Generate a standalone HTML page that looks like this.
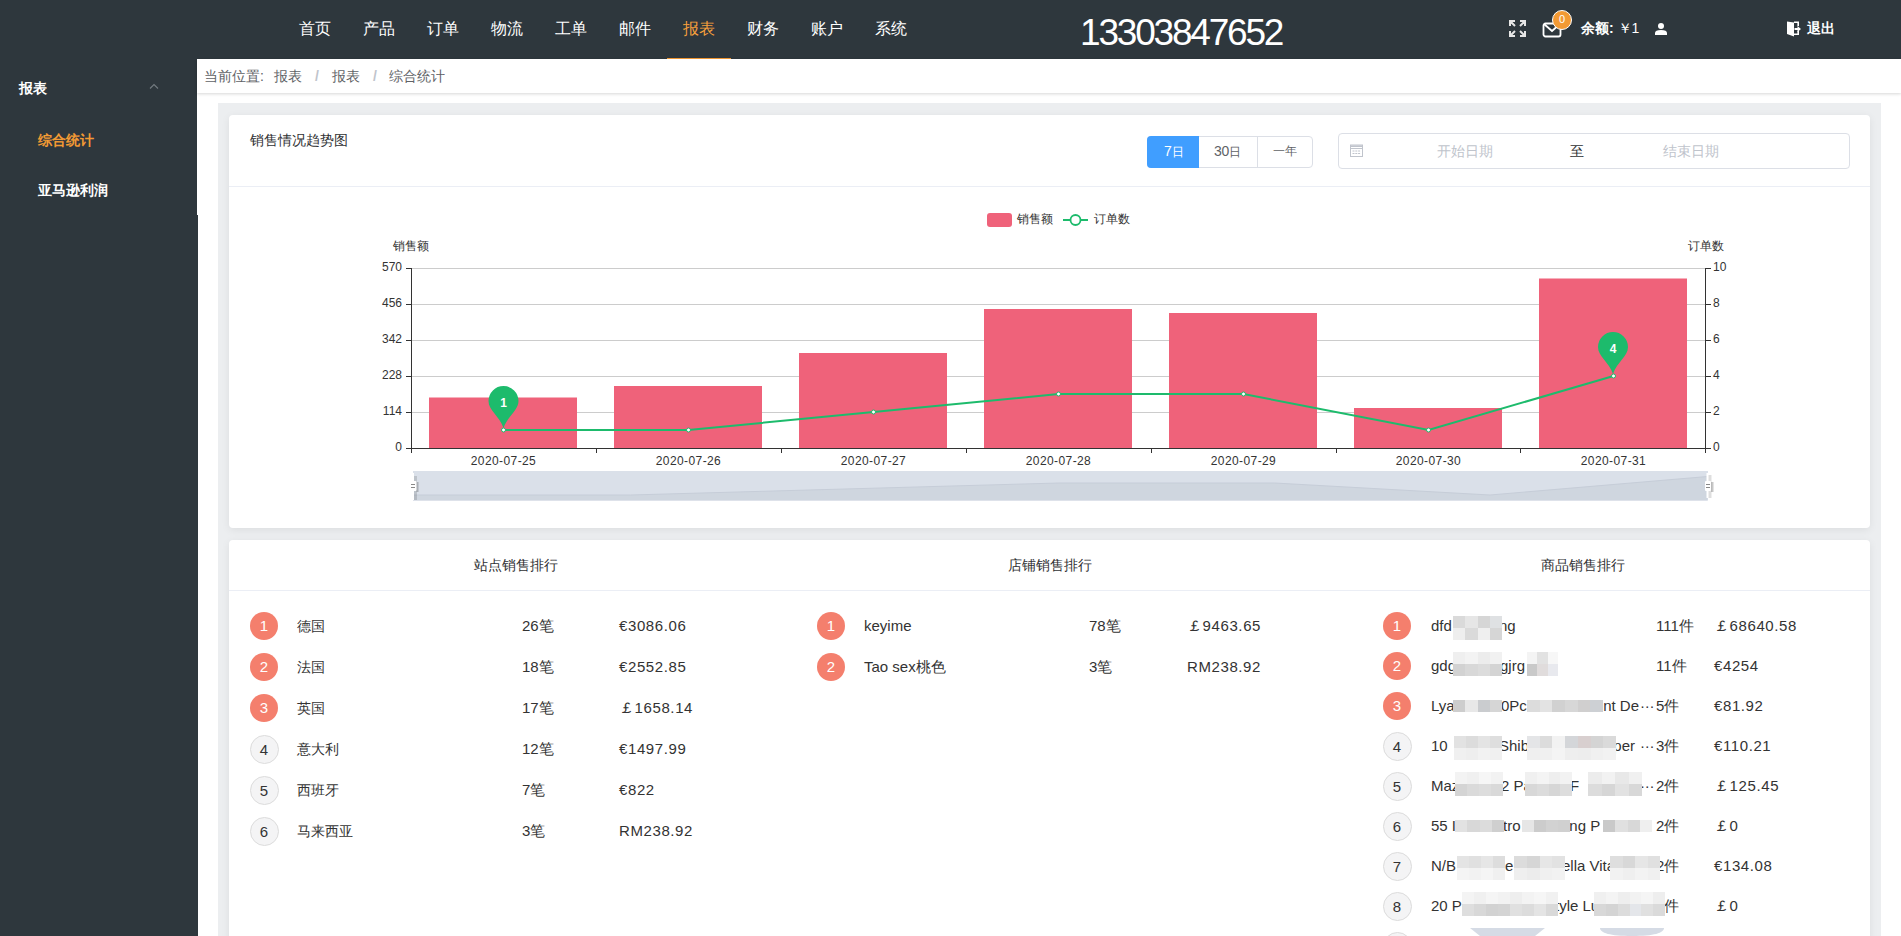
<!DOCTYPE html>
<html><head><meta charset="utf-8">
<style>
*{margin:0;padding:0;box-sizing:border-box}
html,body{width:1901px;height:936px;overflow:hidden;background:#fff;font-family:"Liberation Sans",sans-serif;color:#303133}
.a{position:absolute;white-space:nowrap}
#hdr{left:0;top:0;width:1901px;height:59px;background:#2e373d}
#side{left:0;top:59px;width:197px;height:877px;background:#2e373d}
.nav{top:19px;font-size:16px;color:#fff;line-height:20px}
#bc{left:197px;top:59px;width:1704px;height:34px;background:#fff;box-shadow:0 1px 3px rgba(0,0,0,.16)}
#gray{left:218px;top:103px;width:1663px;height:833px;background:#eceef0}
.card{background:#fff;border-radius:4px;box-shadow:0 2px 8px rgba(0,0,0,.07)}
#c1{left:229px;top:115px;width:1641px;height:413px}
#c2{left:229px;top:540px;width:1641px;height:420px}
.t14{font-size:14px;line-height:16px}
.rk{width:28px;height:28px;border-radius:50%;font-size:15px;line-height:28px;text-align:center}
.r1{background:#f47f6d;color:#fff}
.r2{background:#f4f4f5;color:#333;border:1px solid #dcdcdc;line-height:27px;width:29px;height:29px;margin:-0.5px 0 0 -0.5px}
.nm{font-size:15px;color:#333;line-height:18px}
.mz{position:absolute;display:flex;flex-wrap:wrap}
.mz i{display:block;width:12px;height:12px}
</style></head><body>
<div id="hdr" class="a"></div>
<div id="side" class="a"></div>
<div class="a" style="left:197px;top:215px;width:1px;height:721px;background:#2e373d"></div>
<!-- nav -->
<div class="a nav" style="left:299px">首页</div>
<div class="a nav" style="left:363px">产品</div>
<div class="a nav" style="left:427px">订单</div>
<div class="a nav" style="left:491px">物流</div>
<div class="a nav" style="left:555px">工单</div>
<div class="a nav" style="left:619px">邮件</div>
<div class="a nav" style="left:683px;color:#f7a03c">报表</div>
<div class="a nav" style="left:747px">财务</div>
<div class="a nav" style="left:811px">账户</div>
<div class="a nav" style="left:875px">系统</div>
<div class="a" style="left:667px;top:57.5px;width:64px;height:1.5px;background:#f39a34"></div>
<div class="a" style="left:1080px;top:12px;font-size:37px;line-height:42px;color:#fff;letter-spacing:-2.2px">13303847652</div>
<!-- header icons -->
<svg class="a" style="left:1509px;top:20px" width="17" height="17" viewBox="0 0 17 17" fill="none" stroke="#e6e6e6" stroke-width="2">
<path d="M1 6V1h5M1 1l5 5M11 1h5v5M16 1l-5 5M1 11v5h5M1 16l5-5M16 11v5h-5M16 16l-5-5"/></svg>
<svg class="a" style="left:1542px;top:22px" width="20" height="16" viewBox="0 0 20 16" fill="none" stroke="#fff" stroke-width="1.8">
<rect x="1.5" y="1.5" width="17" height="13" rx="2"/><path d="M2 2l8 7 8-7"/></svg>
<div class="a" style="left:1552px;top:10px;width:20px;height:20px;border-radius:50%;background:#f39a34;border:1.2px solid #fff;color:#fff;font-size:11px;line-height:17.6px;text-align:center">0</div>
<div class="a" style="left:1581px;top:20px;font-size:14px;line-height:16px;color:#fff"><b>余额:</b> ￥1</div>
<svg class="a" style="left:1655px;top:23px" width="12" height="12" viewBox="0 0 12 12" fill="#fff"><circle cx="6" cy="3" r="3"/><path d="M0 12v-2c0-2 2-3 6-3s6 1 6 3v2z"/></svg>
<svg class="a" style="left:1787px;top:21px" width="15" height="16" viewBox="0 0 15 16" fill="#fff"><path d="M0 0.5L7 1.5V15.5L0 13z"/><path d="M7 0.5h5v4.5h-1.6V2H7zM7 12.5h3.4V10H12v4H7z"/><path d="M7.5 7h3V5l3.5 3-3.5 3V9h-3z"/></svg>
<div class="a" style="left:1807px;top:20px;font-size:14px;line-height:16px;color:#fff;font-weight:bold">退出</div>
<!-- sidebar -->
<div class="a" style="left:19px;top:80px;font-size:14px;line-height:16px;color:#fff;font-weight:bold">报表</div>
<svg class="a" style="left:149px;top:83px" width="10" height="7" viewBox="0 0 10 7" fill="none" stroke="#737b81" stroke-width="1.1"><path d="M1 5.5l4-4 4 4"/></svg>
<div class="a" style="left:38px;top:132px;font-size:14px;line-height:16px;color:#f39a34;font-weight:bold">综合统计</div>
<div class="a" style="left:38px;top:182px;font-size:14px;line-height:16px;color:#fff;font-weight:bold">亚马逊利润</div>
<!-- breadcrumb -->
<div id="bc" class="a"></div>
<div class="a" style="left:204px;top:68px;font-size:14px;line-height:16px;color:#606266">当前位置:</div>
<div class="a" style="left:274px;top:68px;font-size:14px;line-height:16px;color:#606266">报表</div>
<div class="a" style="left:315px;top:68px;font-size:14px;line-height:16px;color:#c0c4cc;font-weight:bold">/</div>
<div class="a" style="left:332px;top:68px;font-size:14px;line-height:16px;color:#606266">报表</div>
<div class="a" style="left:373px;top:68px;font-size:14px;line-height:16px;color:#c0c4cc;font-weight:bold">/</div>
<div class="a" style="left:389px;top:68px;font-size:14px;line-height:16px;color:#606266">综合统计</div>
<!-- content -->
<div id="gray" class="a"></div>
<div id="c1" class="a card"></div>
<div class="a" style="left:229px;top:186px;width:1641px;height:1px;background:#ebeef5"></div>
<div class="a" style="left:250px;top:132px;font-size:14px;line-height:16px;color:#303133">销售情况趋势图</div>
<!-- radio group -->
<div class="a" style="left:1147px;top:136px;width:166px;height:32px;border:1px solid #dcdfe6;border-radius:4px"></div>
<div class="a" style="left:1147px;top:136px;width:52px;height:32px;background:#409eff;border-radius:4px 0 0 4px"></div>
<div class="a" style="left:1257px;top:137px;width:1px;height:30px;background:#dcdfe6"></div>
<div class="a" style="left:1164px;top:143px;font-size:12px;line-height:16px;color:#fff"><span style="font-size:14px">7</span>日</div>
<div class="a" style="left:1214px;top:143px;font-size:12px;line-height:16px;color:#606266"><span style="font-size:14px;letter-spacing:-.3px">30</span>日</div>
<div class="a" style="left:1273px;top:144px;font-size:12px;line-height:14px;color:#606266">一年</div>
<!-- date range -->
<div class="a" style="left:1338px;top:133px;width:512px;height:36px;border:1px solid #dcdfe6;border-radius:4px"></div>
<svg class="a" style="left:1350px;top:144px" width="13" height="13" viewBox="0 0 13 13" fill="none" stroke="#c0c4cc" stroke-width="1"><rect x="0.5" y="1" width="12" height="11.5"/><path d="M0.5 2.2h12" stroke-width="1.6"/><path d="M0.5 4.5h12"/><path d="M2.5 7h8M2.5 9.5h8" stroke-dasharray="2 0.8"/></svg>
<div class="a" style="left:1437px;top:143px;font-size:14px;line-height:16px;color:#c0c4cc">开始日期</div>
<div class="a" style="left:1570px;top:143px;font-size:14px;line-height:16px;color:#303133">至</div>
<div class="a" style="left:1663px;top:143px;font-size:14px;line-height:16px;color:#c0c4cc">结束日期</div>
<!-- chart -->
<svg class="a" style="left:0;top:0" width="1901" height="936" font-family="Liberation Sans, sans-serif">
<rect x="987" y="213" width="25" height="14" rx="3" fill="#ef627a"/>
<text x="1017" y="222.5" font-size="12" fill="#333">销售额</text>
<path d="M1063 220h25" stroke="#1dbb6c" stroke-width="2"/>
<circle cx="1075.5" cy="220" r="5" fill="#fff" stroke="#1dbb6c" stroke-width="1.8"/>
<text x="1094" y="222.5" font-size="12" fill="#333">订单数</text>
<text x="393" y="250" font-size="12" fill="#333">销售额</text>
<text x="1688" y="250" font-size="12" fill="#333">订单数</text>
<g stroke="#ccc" stroke-width="1">
<path d="M411 268.5h1295M411 304.5h1295M411 340.5h1295M411 376.5h1295M411 412.5h1295"/>
</g>
<g fill="#ef627a">
<rect x="429" y="397.5" width="148" height="50.5"/>
<rect x="614" y="386" width="148" height="62"/>
<rect x="799" y="353" width="148" height="95"/>
<rect x="984" y="309" width="148" height="139"/>
<rect x="1169" y="313" width="148" height="135"/>
<rect x="1354" y="408" width="148" height="40"/>
<rect x="1539" y="278.5" width="148" height="169.5"/>
</g>
<g stroke="#333" stroke-width="1" fill="none">
<path d="M411.5 268v180M1705.5 268v180M406 448.5h1300"/>
<path d="M406 268.5h5M406 304.5h5M406 340.5h5M406 376.5h5M406 412.5h5"/>
<path d="M1706 268.5h5M1706 304.5h5M1706 340.5h5M1706 376.5h5M1706 412.5h5M1706 448.5h5"/>
<path d="M411.5 448v5M596.5 448v5M781.5 448v5M966.5 448v5M1151.5 448v5M1336.5 448v5M1520.5 448v5M1705.5 448v5"/>
</g>
<g font-size="12" fill="#333" text-anchor="end">
<text x="402" y="271">570</text><text x="402" y="307">456</text><text x="402" y="343">342</text><text x="402" y="379">228</text><text x="402" y="415">114</text><text x="402" y="451">0</text>
</g>
<g font-size="12" fill="#333">
<text x="1713" y="271">10</text><text x="1713" y="307">8</text><text x="1713" y="343">6</text><text x="1713" y="379">4</text><text x="1713" y="415">2</text><text x="1713" y="451">0</text>
</g>
<g font-size="12" fill="#333" text-anchor="middle" letter-spacing="0.4">
<text x="503.5" y="465">2020-07-25</text><text x="688.5" y="465">2020-07-26</text><text x="873.5" y="465">2020-07-27</text><text x="1058.5" y="465">2020-07-28</text><text x="1243.5" y="465">2020-07-29</text><text x="1428.5" y="465">2020-07-30</text><text x="1613.5" y="465">2020-07-31</text>
</g>
<polyline points="503.5,430 688.5,430 873.5,412 1058.5,394 1243.5,394 1428.5,430 1613.5,376" fill="none" stroke="#1dbb6c" stroke-width="2"/>
<g fill="#fff" stroke="#1dbb6c" stroke-width="1">
<circle cx="503.5" cy="430" r="2"/><circle cx="688.5" cy="430" r="2"/><circle cx="873.5" cy="412" r="2"/><circle cx="1058.5" cy="394" r="2"/><circle cx="1243.5" cy="394" r="2"/><circle cx="1428.5" cy="430" r="2"/><circle cx="1613.5" cy="376" r="2"/>
</g>
<g fill="#1dbb6c">
<path d="M503.5 428C499.5 416 488.5 410.5 488.5 401a15 15 0 0 1 30 0C518.5 410.5 507.5 416 503.5 428z"/>
<path d="M1613 374C1609 362 1598 356.5 1598 347a15 15 0 0 1 30 0C1628 356.5 1617 362 1613 374z"/>
</g>
<g font-size="12" fill="#fff" text-anchor="middle" font-weight="bold">
<text x="503.5" y="407">1</text><text x="1613" y="353">4</text>
</g>
<!-- datazoom -->
<rect x="413" y="471" width="1295" height="29.5" fill="#dae0e9"/>
<path d="M413 495L630.5 495L1059 483L1274.5 483L1490 495L1707.5 476.5V500.5H413z" fill="#cfd6df"/>
<path d="M413 495L630.5 495L1059 483L1274.5 483L1490 495L1707.5 476.5" stroke="#c6cdd8" fill="none" stroke-width="1"/>
<g fill="rgba(0,0,0,.13)"><rect x="414" y="476" width="3" height="24"/><rect x="1708.5" y="475" width="3" height="23"/></g>
<g fill="rgba(0,0,0,.22)"><rect x="416.5" y="482" width="2" height="10"/><rect x="1711" y="482" width="2.5" height="10"/></g>
<g fill="#fff">
<rect x="412.5" y="473" width="1.5" height="27"/><rect x="410" y="481" width="6.5" height="10" rx="1"/>
<rect x="1706.5" y="473" width="1.5" height="25"/><rect x="1705" y="481" width="6" height="10" rx="1"/>
</g>
<g fill="#888"><rect x="411" y="484" width="4" height="1"/><rect x="411" y="487" width="4" height="1"/><rect x="1706" y="484" width="4" height="1"/><rect x="1706" y="487" width="4" height="1"/></g>
</svg>
<!-- card 2 -->
<div id="c2" class="a card"></div>
<div class="a" style="left:229px;top:590px;width:1641px;height:1px;background:#ebeef5"></div>
<div class="a t14" style="left:474px;top:557px">站点销售排行</div>
<div class="a t14" style="left:1008px;top:557px">店铺销售排行</div>
<div class="a t14" style="left:1541px;top:557px">商品销售排行</div>
<div id="rows">
<div class="a rk r1" style="left:250px;top:612px">1</div>
<div class="a nm" style="left:297px;top:617px;font-size:14px">德国</div>
<div class="a nm" style="left:522px;top:617px;">26笔</div>
<div class="a nm" style="left:619px;top:617px;letter-spacing:.6px">€3086.06</div>
<div class="a rk r1" style="left:250px;top:653px">2</div>
<div class="a nm" style="left:297px;top:658px;font-size:14px">法国</div>
<div class="a nm" style="left:522px;top:658px;">18笔</div>
<div class="a nm" style="left:619px;top:658px;letter-spacing:.6px">€2552.85</div>
<div class="a rk r1" style="left:250px;top:694px">3</div>
<div class="a nm" style="left:297px;top:699px;font-size:14px">英国</div>
<div class="a nm" style="left:522px;top:699px;">17笔</div>
<div class="a nm" style="left:619px;top:699px;letter-spacing:.6px">￡1658.14</div>
<div class="a rk r2" style="left:250px;top:735px">4</div>
<div class="a nm" style="left:297px;top:740px;font-size:14px">意大利</div>
<div class="a nm" style="left:522px;top:740px;">12笔</div>
<div class="a nm" style="left:619px;top:740px;letter-spacing:.6px">€1497.99</div>
<div class="a rk r2" style="left:250px;top:776px">5</div>
<div class="a nm" style="left:297px;top:781px;font-size:14px">西班牙</div>
<div class="a nm" style="left:522px;top:781px;">7笔</div>
<div class="a nm" style="left:619px;top:781px;letter-spacing:.6px">€822</div>
<div class="a rk r2" style="left:250px;top:817px">6</div>
<div class="a nm" style="left:297px;top:822px;font-size:14px">马来西亚</div>
<div class="a nm" style="left:522px;top:822px;">3笔</div>
<div class="a nm" style="left:619px;top:822px;letter-spacing:.6px">RM238.92</div>
<div class="a rk r1" style="left:817px;top:612px">1</div>
<div class="a nm" style="left:864px;top:617px;">keyime</div>
<div class="a nm" style="left:1089px;top:617px;">78笔</div>
<div class="a nm" style="left:1187px;top:617px;letter-spacing:.6px">￡9463.65</div>
<div class="a rk r1" style="left:817px;top:653px">2</div>
<div class="a nm" style="left:864px;top:658px;">Tao sex桃色</div>
<div class="a nm" style="left:1089px;top:658px;">3笔</div>
<div class="a nm" style="left:1187px;top:658px;letter-spacing:.6px">RM238.92</div>
<div class="a rk r1" style="left:1383px;top:612px">1</div>
<div class="a nm" style="left:1431px;top:617px;">dfd</div>
<div class="a nm" style="left:1499px;top:617px;">ng</div>
<div class="a nm" style="left:1656px;top:617px;">111件</div>
<div class="a nm" style="left:1714px;top:617px;letter-spacing:.6px">￡68640.58</div>
<div class="a rk r1" style="left:1383px;top:652px">2</div>
<div class="a nm" style="left:1431px;top:657px;">gdg</div>
<div class="a nm" style="left:1500px;top:657px;">gjrg</div>
<div class="a nm" style="left:1656px;top:657px;">11件</div>
<div class="a nm" style="left:1714px;top:657px;letter-spacing:.6px">€4254</div>
<div class="a rk r1" style="left:1383px;top:692px">3</div>
<div class="a nm" style="left:1431px;top:697px;">Lya</div>
<div class="a nm" style="left:1501px;top:697px;">0Pc</div>
<div class="a nm" style="left:0px;top:697px;left:auto;right:262px">ent De</div>
<div class="a nm" style="left:1640px;top:697px;letter-spacing:-.2px">···</div>
<div class="a nm" style="left:1656px;top:697px;">5件</div>
<div class="a nm" style="left:1714px;top:697px;letter-spacing:.6px">€81.92</div>
<div class="a rk r2" style="left:1383px;top:732px">4</div>
<div class="a nm" style="left:1431px;top:737px;">10</div>
<div class="a nm" style="left:1499px;top:737px;">Shib</div>
<div class="a nm" style="left:0px;top:737px;left:auto;right:266px">per</div>
<div class="a nm" style="left:1640px;top:737px;letter-spacing:-.2px">···</div>
<div class="a nm" style="left:1656px;top:737px;">3件</div>
<div class="a nm" style="left:1714px;top:737px;letter-spacing:.6px">€110.21</div>
<div class="a rk r2" style="left:1383px;top:772px">5</div>
<div class="a nm" style="left:1431px;top:777px;">Maz</div>
<div class="a nm" style="left:1501px;top:777px;">2 Pa</div>
<div class="a nm" style="left:1570px;top:777px;">F</div>
<div class="a nm" style="left:1640px;top:777px;letter-spacing:-.2px">···</div>
<div class="a nm" style="left:1656px;top:777px;">2件</div>
<div class="a nm" style="left:1714px;top:777px;letter-spacing:.6px">￡125.45</div>
<div class="a rk r2" style="left:1383px;top:812px">6</div>
<div class="a nm" style="left:1431px;top:817px;">55 I</div>
<div class="a nm" style="left:1503px;top:817px;">tro</div>
<div class="a nm" style="left:1566px;top:817px;">ing P</div>
<div class="a nm" style="left:1656px;top:817px;">2件</div>
<div class="a nm" style="left:1714px;top:817px;letter-spacing:.6px">￡0</div>
<div class="a rk r2" style="left:1383px;top:852px">7</div>
<div class="a nm" style="left:1431px;top:857px;">N/B</div>
<div class="a nm" style="left:1505px;top:857px;">e</div>
<div class="a nm" style="left:1562px;top:857px;">ella Vita</div>
<div class="a nm" style="left:1656px;top:857px;">2件</div>
<div class="a nm" style="left:1714px;top:857px;letter-spacing:.6px">€134.08</div>
<div class="a rk r2" style="left:1383px;top:892px">8</div>
<div class="a nm" style="left:1431px;top:897px;">20 P</div>
<div class="a nm" style="left:1555px;top:897px;">tyle Lu</div>
<div class="a nm" style="left:1656px;top:897px;">2件</div>
<div class="a nm" style="left:1714px;top:897px;letter-spacing:.6px">￡0</div>
<div class="a rk r2" style="left:1383px;top:932px">9</div>
<div class="a nm" style="left:1656px;top:937px;">2件</div>
<div class="a" style="left:1453.0px;top:616.0px;width:12.7px;height:12.4px;background:#dadada"></div>
<div class="a" style="left:1465.2px;top:616.0px;width:12.7px;height:12.4px;background:#e6e6e6"></div>
<div class="a" style="left:1477.5px;top:616.0px;width:12.7px;height:12.4px;background:#d6d6d6"></div>
<div class="a" style="left:1489.8px;top:616.0px;width:12.7px;height:12.4px;background:#dfe1e3"></div>
<div class="a" style="left:1453.0px;top:628.0px;width:12.7px;height:12.4px;background:#eeeeee"></div>
<div class="a" style="left:1465.2px;top:628.0px;width:12.7px;height:12.4px;background:#dadada"></div>
<div class="a" style="left:1477.5px;top:628.0px;width:12.7px;height:12.4px;background:#efefef"></div>
<div class="a" style="left:1489.8px;top:628.0px;width:12.7px;height:12.4px;background:#d6d6d6"></div>
<div class="a" style="left:1453.0px;top:652.0px;width:12.7px;height:12.4px;background:#efefef"></div>
<div class="a" style="left:1465.2px;top:652.0px;width:12.7px;height:12.4px;background:#f3f3f3"></div>
<div class="a" style="left:1477.5px;top:652.0px;width:12.7px;height:12.4px;background:#ececec"></div>
<div class="a" style="left:1489.8px;top:652.0px;width:12.7px;height:12.4px;background:#f1f1f1"></div>
<div class="a" style="left:1453.0px;top:664.0px;width:12.7px;height:12.4px;background:#d2d2d2"></div>
<div class="a" style="left:1465.2px;top:664.0px;width:12.7px;height:12.4px;background:#d8d8d8"></div>
<div class="a" style="left:1477.5px;top:664.0px;width:12.7px;height:12.4px;background:#dcdcdc"></div>
<div class="a" style="left:1489.8px;top:664.0px;width:12.7px;height:12.4px;background:#d4d4d4"></div>
<div class="a" style="left:1527.0px;top:652.0px;width:10.7px;height:12.4px;background:#f4f4f4"></div>
<div class="a" style="left:1537.3px;top:652.0px;width:10.7px;height:12.4px;background:#e2e2e2"></div>
<div class="a" style="left:1547.7px;top:652.0px;width:10.7px;height:12.4px;background:#f7f7f7"></div>
<div class="a" style="left:1527.0px;top:664.0px;width:10.7px;height:12.4px;background:#c9c9c9"></div>
<div class="a" style="left:1537.3px;top:664.0px;width:10.7px;height:12.4px;background:#e0dcdc"></div>
<div class="a" style="left:1547.7px;top:664.0px;width:10.7px;height:12.4px;background:#e8e9ee"></div>
<div class="a" style="left:1453.0px;top:700.0px;width:12.7px;height:12.4px;background:#cdcdcd"></div>
<div class="a" style="left:1465.2px;top:700.0px;width:12.7px;height:12.4px;background:#e8e8e8"></div>
<div class="a" style="left:1477.5px;top:700.0px;width:12.7px;height:12.4px;background:#cacccf"></div>
<div class="a" style="left:1489.8px;top:700.0px;width:12.7px;height:12.4px;background:#d6d6d6"></div>
<div class="a" style="left:1527.0px;top:700.0px;width:13.1px;height:12.4px;background:#dcdcdc"></div>
<div class="a" style="left:1539.7px;top:700.0px;width:13.1px;height:12.4px;background:#e3e3e3"></div>
<div class="a" style="left:1552.3px;top:700.0px;width:13.1px;height:12.4px;background:#d1d1d1"></div>
<div class="a" style="left:1565.0px;top:700.0px;width:13.1px;height:12.4px;background:#d7d7d7"></div>
<div class="a" style="left:1577.7px;top:700.0px;width:13.1px;height:12.4px;background:#d0cfcf"></div>
<div class="a" style="left:1590.3px;top:700.0px;width:13.1px;height:12.4px;background:#cdd0d4"></div>
<div class="a" style="left:1454.0px;top:736.0px;width:12.4px;height:12.4px;background:#e2e2e2"></div>
<div class="a" style="left:1466.0px;top:736.0px;width:12.4px;height:12.4px;background:#dcdcdc"></div>
<div class="a" style="left:1478.0px;top:736.0px;width:12.4px;height:12.4px;background:#e4e4e4"></div>
<div class="a" style="left:1490.0px;top:736.0px;width:12.4px;height:12.4px;background:#dedede"></div>
<div class="a" style="left:1454.0px;top:748.0px;width:12.4px;height:12.4px;background:#f0f0f0"></div>
<div class="a" style="left:1466.0px;top:748.0px;width:12.4px;height:12.4px;background:#eeeeee"></div>
<div class="a" style="left:1478.0px;top:748.0px;width:12.4px;height:12.4px;background:#f2f2f2"></div>
<div class="a" style="left:1490.0px;top:748.0px;width:12.4px;height:12.4px;background:#f0f0f0"></div>
<div class="a" style="left:1527.0px;top:736.0px;width:13.1px;height:12.4px;background:#e4e5e7"></div>
<div class="a" style="left:1539.7px;top:736.0px;width:13.1px;height:12.4px;background:#dcdcdc"></div>
<div class="a" style="left:1552.4px;top:736.0px;width:13.1px;height:12.4px;background:#f2f2f2"></div>
<div class="a" style="left:1565.1px;top:736.0px;width:13.1px;height:12.4px;background:#d4d6d9"></div>
<div class="a" style="left:1577.9px;top:736.0px;width:13.1px;height:12.4px;background:#d8cfcf"></div>
<div class="a" style="left:1590.6px;top:736.0px;width:13.1px;height:12.4px;background:#d4d4d4"></div>
<div class="a" style="left:1603.3px;top:736.0px;width:13.1px;height:12.4px;background:#dadada"></div>
<div class="a" style="left:1527.0px;top:748.0px;width:13.1px;height:12.4px;background:#efefef"></div>
<div class="a" style="left:1539.7px;top:748.0px;width:13.1px;height:12.4px;background:#f0f0f0"></div>
<div class="a" style="left:1552.4px;top:748.0px;width:13.1px;height:12.4px;background:#f4f4f4"></div>
<div class="a" style="left:1565.1px;top:748.0px;width:13.1px;height:12.4px;background:#eeeeee"></div>
<div class="a" style="left:1577.9px;top:748.0px;width:13.1px;height:12.4px;background:#ededed"></div>
<div class="a" style="left:1590.6px;top:748.0px;width:13.1px;height:12.4px;background:#f0f0f0"></div>
<div class="a" style="left:1603.3px;top:748.0px;width:13.1px;height:12.4px;background:#f2f2f2"></div>
<div class="a" style="left:1455.0px;top:772.0px;width:12.4px;height:12.4px;background:#f3f3f3"></div>
<div class="a" style="left:1467.0px;top:772.0px;width:12.4px;height:12.4px;background:#f0f0f0"></div>
<div class="a" style="left:1479.0px;top:772.0px;width:12.4px;height:12.4px;background:#f6f6f6"></div>
<div class="a" style="left:1491.0px;top:772.0px;width:12.4px;height:12.4px;background:#f2f2f2"></div>
<div class="a" style="left:1455.0px;top:784.0px;width:12.4px;height:12.4px;background:#d4d4d4"></div>
<div class="a" style="left:1467.0px;top:784.0px;width:12.4px;height:12.4px;background:#dadada"></div>
<div class="a" style="left:1479.0px;top:784.0px;width:12.4px;height:12.4px;background:#dddddd"></div>
<div class="a" style="left:1491.0px;top:784.0px;width:12.4px;height:12.4px;background:#d9d9d9"></div>
<div class="a" style="left:1525.0px;top:772.0px;width:12.2px;height:12.4px;background:#f0f0f0"></div>
<div class="a" style="left:1536.8px;top:772.0px;width:12.2px;height:12.4px;background:#f4f4f4"></div>
<div class="a" style="left:1548.5px;top:772.0px;width:12.2px;height:12.4px;background:#eeeeee"></div>
<div class="a" style="left:1560.2px;top:772.0px;width:12.2px;height:12.4px;background:#f2f2f2"></div>
<div class="a" style="left:1525.0px;top:784.0px;width:12.2px;height:12.4px;background:#d8d8d8"></div>
<div class="a" style="left:1536.8px;top:784.0px;width:12.2px;height:12.4px;background:#dcdcdc"></div>
<div class="a" style="left:1548.5px;top:784.0px;width:12.2px;height:12.4px;background:#d6d6d6"></div>
<div class="a" style="left:1560.2px;top:784.0px;width:12.2px;height:12.4px;background:#dddddd"></div>
<div class="a" style="left:1588.0px;top:772.0px;width:13.9px;height:12.4px;background:#ececec"></div>
<div class="a" style="left:1601.5px;top:772.0px;width:13.9px;height:12.4px;background:#f2f2f2"></div>
<div class="a" style="left:1615.0px;top:772.0px;width:13.9px;height:12.4px;background:#e8e8e8"></div>
<div class="a" style="left:1628.5px;top:772.0px;width:13.9px;height:12.4px;background:#f0f0f0"></div>
<div class="a" style="left:1588.0px;top:784.0px;width:13.9px;height:12.4px;background:#dcdcdc"></div>
<div class="a" style="left:1601.5px;top:784.0px;width:13.9px;height:12.4px;background:#d6d6d6"></div>
<div class="a" style="left:1615.0px;top:784.0px;width:13.9px;height:12.4px;background:#e2e2e2"></div>
<div class="a" style="left:1628.5px;top:784.0px;width:13.9px;height:12.4px;background:#d8d8d8"></div>
<div class="a" style="left:1455.0px;top:820.0px;width:12.7px;height:12.4px;background:#e2e2e2"></div>
<div class="a" style="left:1467.2px;top:820.0px;width:12.7px;height:12.4px;background:#d8d8d8"></div>
<div class="a" style="left:1479.5px;top:820.0px;width:12.7px;height:12.4px;background:#dcdcdc"></div>
<div class="a" style="left:1491.8px;top:820.0px;width:12.7px;height:12.4px;background:#cfcfcf"></div>
<div class="a" style="left:1522.0px;top:820.0px;width:12.4px;height:12.4px;background:#e6e6e6"></div>
<div class="a" style="left:1534.0px;top:820.0px;width:12.4px;height:12.4px;background:#cccccc"></div>
<div class="a" style="left:1546.0px;top:820.0px;width:12.4px;height:12.4px;background:#d2d2d2"></div>
<div class="a" style="left:1558.0px;top:820.0px;width:12.4px;height:12.4px;background:#d0d0d0"></div>
<div class="a" style="left:1603.0px;top:820.0px;width:12.7px;height:12.4px;background:#c9c9c9"></div>
<div class="a" style="left:1615.2px;top:820.0px;width:12.7px;height:12.4px;background:#e0e0e0"></div>
<div class="a" style="left:1627.5px;top:820.0px;width:12.7px;height:12.4px;background:#d8d8d8"></div>
<div class="a" style="left:1639.8px;top:820.0px;width:12.7px;height:12.4px;background:#efefef"></div>
<div class="a" style="left:1457.0px;top:856.0px;width:12.4px;height:12.4px;background:#e4e4e4"></div>
<div class="a" style="left:1469.0px;top:856.0px;width:12.4px;height:12.4px;background:#e0e0e0"></div>
<div class="a" style="left:1481.0px;top:856.0px;width:12.4px;height:12.4px;background:#e6e6e6"></div>
<div class="a" style="left:1493.0px;top:856.0px;width:12.4px;height:12.4px;background:#dddddd"></div>
<div class="a" style="left:1457.0px;top:868.0px;width:12.4px;height:12.4px;background:#f4f4f4"></div>
<div class="a" style="left:1469.0px;top:868.0px;width:12.4px;height:12.4px;background:#f2f2f2"></div>
<div class="a" style="left:1481.0px;top:868.0px;width:12.4px;height:12.4px;background:#f5f5f5"></div>
<div class="a" style="left:1493.0px;top:868.0px;width:12.4px;height:12.4px;background:#f0f0f0"></div>
<div class="a" style="left:1514.0px;top:856.0px;width:13.2px;height:12.4px;background:#dcdcdc"></div>
<div class="a" style="left:1526.8px;top:856.0px;width:13.2px;height:12.4px;background:#d6d6d6"></div>
<div class="a" style="left:1539.5px;top:856.0px;width:13.2px;height:12.4px;background:#e6e6e6"></div>
<div class="a" style="left:1552.2px;top:856.0px;width:13.2px;height:12.4px;background:#e2e2e2"></div>
<div class="a" style="left:1514.0px;top:868.0px;width:13.2px;height:12.4px;background:#efefef"></div>
<div class="a" style="left:1526.8px;top:868.0px;width:13.2px;height:12.4px;background:#ececec"></div>
<div class="a" style="left:1539.5px;top:868.0px;width:13.2px;height:12.4px;background:#f0f0f0"></div>
<div class="a" style="left:1552.2px;top:868.0px;width:13.2px;height:12.4px;background:#f2f2f2"></div>
<div class="a" style="left:1610.0px;top:856.0px;width:12.9px;height:12.4px;background:#dedede"></div>
<div class="a" style="left:1622.5px;top:856.0px;width:12.9px;height:12.4px;background:#d8d8d8"></div>
<div class="a" style="left:1635.0px;top:856.0px;width:12.9px;height:12.4px;background:#e6e6e6"></div>
<div class="a" style="left:1647.5px;top:856.0px;width:12.9px;height:12.4px;background:#e0e0e0"></div>
<div class="a" style="left:1610.0px;top:868.0px;width:12.9px;height:12.4px;background:#f2f2f2"></div>
<div class="a" style="left:1622.5px;top:868.0px;width:12.9px;height:12.4px;background:#efefef"></div>
<div class="a" style="left:1635.0px;top:868.0px;width:12.9px;height:12.4px;background:#f3f3f3"></div>
<div class="a" style="left:1647.5px;top:868.0px;width:12.9px;height:12.4px;background:#f0f0f0"></div>
<div class="a" style="left:1462.0px;top:892.0px;width:12.4px;height:12.4px;background:#f4f4f4"></div>
<div class="a" style="left:1474.0px;top:892.0px;width:12.4px;height:12.4px;background:#f0f0f0"></div>
<div class="a" style="left:1486.0px;top:892.0px;width:12.4px;height:12.4px;background:#f5f5f5"></div>
<div class="a" style="left:1498.0px;top:892.0px;width:12.4px;height:12.4px;background:#f2f2f2"></div>
<div class="a" style="left:1510.0px;top:892.0px;width:12.4px;height:12.4px;background:#eeeeee"></div>
<div class="a" style="left:1522.0px;top:892.0px;width:12.4px;height:12.4px;background:#f3f3f3"></div>
<div class="a" style="left:1534.0px;top:892.0px;width:12.4px;height:12.4px;background:#f6f6f6"></div>
<div class="a" style="left:1546.0px;top:892.0px;width:12.4px;height:12.4px;background:#f1f1f1"></div>
<div class="a" style="left:1462.0px;top:904.0px;width:12.4px;height:12.4px;background:#dedede"></div>
<div class="a" style="left:1474.0px;top:904.0px;width:12.4px;height:12.4px;background:#d8d8d8"></div>
<div class="a" style="left:1486.0px;top:904.0px;width:12.4px;height:12.4px;background:#d2d2d2"></div>
<div class="a" style="left:1498.0px;top:904.0px;width:12.4px;height:12.4px;background:#d4d4d4"></div>
<div class="a" style="left:1510.0px;top:904.0px;width:12.4px;height:12.4px;background:#e0e0e0"></div>
<div class="a" style="left:1522.0px;top:904.0px;width:12.4px;height:12.4px;background:#dcdcdc"></div>
<div class="a" style="left:1534.0px;top:904.0px;width:12.4px;height:12.4px;background:#e4e4e4"></div>
<div class="a" style="left:1546.0px;top:904.0px;width:12.4px;height:12.4px;background:#d9d9d9"></div>
<div class="a" style="left:1594.0px;top:892.0px;width:12.2px;height:12.4px;background:#f0f0f0"></div>
<div class="a" style="left:1605.8px;top:892.0px;width:12.2px;height:12.4px;background:#f4f4f4"></div>
<div class="a" style="left:1617.7px;top:892.0px;width:12.2px;height:12.4px;background:#eeeeee"></div>
<div class="a" style="left:1629.5px;top:892.0px;width:12.2px;height:12.4px;background:#f2f2f2"></div>
<div class="a" style="left:1641.3px;top:892.0px;width:12.2px;height:12.4px;background:#f5f5f5"></div>
<div class="a" style="left:1653.2px;top:892.0px;width:12.2px;height:12.4px;background:#eeeeee"></div>
<div class="a" style="left:1594.0px;top:904.0px;width:12.2px;height:12.4px;background:#d8d8d8"></div>
<div class="a" style="left:1605.8px;top:904.0px;width:12.2px;height:12.4px;background:#d4d4d4"></div>
<div class="a" style="left:1617.7px;top:904.0px;width:12.2px;height:12.4px;background:#dcdcdc"></div>
<div class="a" style="left:1629.5px;top:904.0px;width:12.2px;height:12.4px;background:#e4e6ea"></div>
<div class="a" style="left:1641.3px;top:904.0px;width:12.2px;height:12.4px;background:#e0e0e0"></div>
<div class="a" style="left:1653.2px;top:904.0px;width:12.2px;height:12.4px;background:#dadada"></div>
<svg class="a" style="left:1460px;top:925px" width="220" height="11"><path d="M10 3h75l-10 8H20z" fill="#d5dbe5"/><path d="M140 3h64c0 5-10 8-32 8s-32-3-32-8z" fill="#d5dbe5"/></svg>
</div>
</body></html>
